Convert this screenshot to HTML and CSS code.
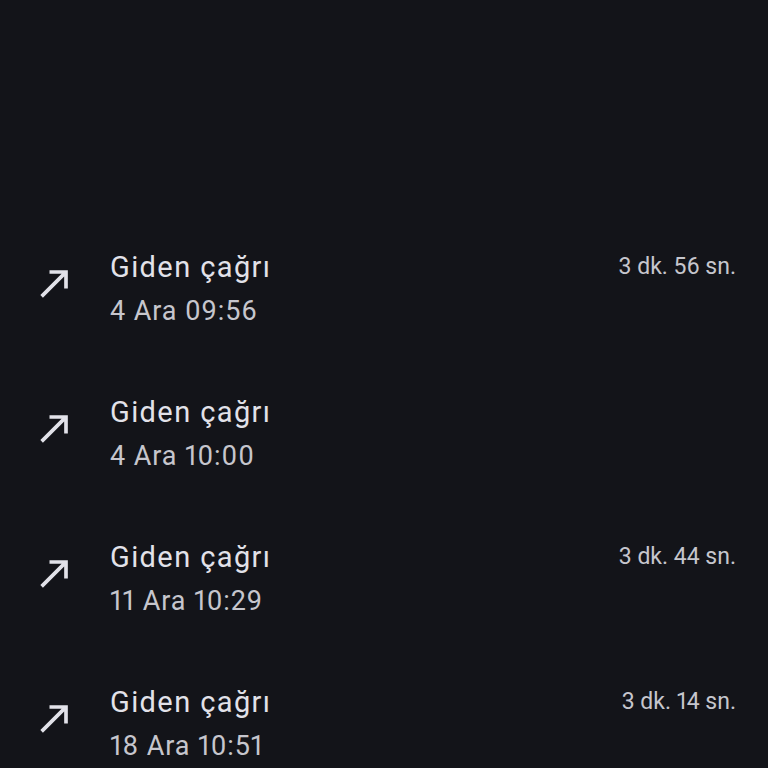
FILE: index.html
```html
<!DOCTYPE html>
<html lang="tr">
<head>
  <meta charset="UTF-8">
  <title>Arama geçmişi</title>
  <link rel="stylesheet" href="styles.css">
</head>
<body>

  <div class="call-list">

    <div class="call-row">
      <svg class="call-icon" viewBox="0 0 24 24"><path d="M9 5v2h6.59L4 18.59 5.41 20 17 8.41V15h2V5z"/></svg>
      <div class="call-info">
        <div class="call-title">Giden çağrı</div>
        <div class="call-time">4 Ara 09:56</div>
      </div>
      <div class="call-duration">3 dk. 56 sn.</div>
    </div>

    <div class="call-row">
      <svg class="call-icon" viewBox="0 0 24 24"><path d="M9 5v2h6.59L4 18.59 5.41 20 17 8.41V15h2V5z"/></svg>
      <div class="call-info">
        <div class="call-title">Giden çağrı</div>
        <div class="call-time">4 Ara 10:00</div>
      </div>
      <div class="call-duration"></div>
    </div>

    <div class="call-row">
      <svg class="call-icon" viewBox="0 0 24 24"><path d="M9 5v2h6.59L4 18.59 5.41 20 17 8.41V15h2V5z"/></svg>
      <div class="call-info">
        <div class="call-title">Giden çağrı</div>
        <div class="call-time">11 Ara 10:29</div>
      </div>
      <div class="call-duration">3 dk. 44 sn.</div>
    </div>

    <div class="call-row">
      <svg class="call-icon" viewBox="0 0 24 24"><path d="M9 5v2h6.59L4 18.59 5.41 20 17 8.41V15h2V5z"/></svg>
      <div class="call-info">
        <div class="call-title">Giden çağrı</div>
        <div class="call-time">18 Ara 10:51</div>
      </div>
      <div class="call-duration">3 dk. 14 sn.</div>
    </div>

  </div>

</body>
</html>
```

FILE: styles.css
```css
html, body {
  height: 100%;
}

body {
  margin: 0;
  background: #131419;
  font-family: Roboto, "Noto Sans", sans-serif;
  font-variant-numeric: proportional-nums;
  overflow: hidden;
}

.call-list {
  padding-top: 217px;
}

.call-row {
  display: flex;
  align-items: flex-start;
  height: 145px;
  box-sizing: border-box;
  padding: 28px 32px 0 33px;
}

.call-icon {
  width: 44px;
  height: 44px;
  fill: #e2e2e9;
  margin-top: 16px;
  flex-shrink: 0;
}

.call-info {
  flex: 1;
  margin-left: 33px;
}

.call-title {
  font-size: 29px;
  line-height: 44px;
  letter-spacing: 1.4px;
  color: #e2e2e9;
}

.call-time {
  font-size: 27px;
  line-height: 44px;
  letter-spacing: 0.9px;
  color: #c6c6cd;
}

.call-duration {
  font-size: 23px;
  line-height: 44px;
  color: #c6c6cd;
}
```
